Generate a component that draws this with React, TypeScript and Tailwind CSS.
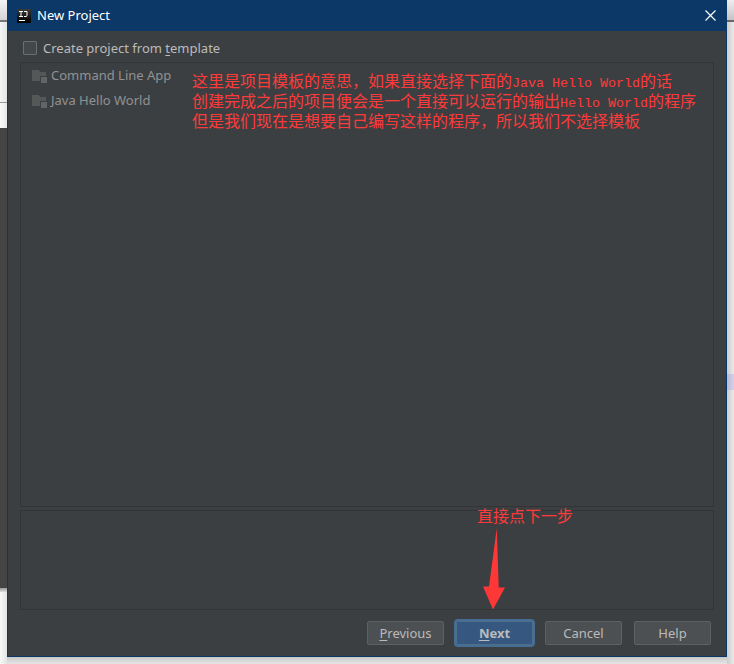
import React from "react";

const UI = "font-['Noto_Sans','Noto_Sans_CJK_SC',sans-serif]";
const NOTE = "font-['Noto_Sans_CJK_SC',sans-serif]";

function Latin({ children }: { children: string }) {
  return (
    <span className="font-['Liberation_Mono','Noto_Sans_CJK_SC',monospace] text-[13.33px]">{children}</span>
  );
}

function TemplateItem({ label, spacing }: { label: string; spacing: string }) {
  return (
    <div className="flex h-[25px] items-center">
      <svg width="16" height="14" viewBox="0 0 16 14" className="mr-[3px] shrink-0" shapeRendering="crispEdges">
        <path d="M0 1h6l2 2h6v4H8v5H0z" fill="#555857" />
        <path d="M9 8h6v6H9z" fill="#626566" />
      </svg>
      <span className={`whitespace-nowrap text-[13px] leading-[25px] text-[#909294] ${spacing}`}>{label}</span>
    </div>
  );
}

function DialogButton({ children }: { children: React.ReactNode }) {
  return (
    <button className="h-6 w-[77px] rounded-[2px] border border-[#5e6162] bg-[#4c5052] text-center text-[13px] leading-[23px] text-[#bbbbbb]">
      {children}
    </button>
  );
}

export default function App() {
  return (
    <div className={`flex h-[664px] w-[734px] overflow-hidden bg-[#f2f2f2] ${UI}`}>
      <div className="flex w-[7px] shrink-0 flex-col">
        <div className="h-5 bg-linear-to-b from-[#f4f4f4] to-[#d4d4d4]" />
        <div className="h-0.5 bg-[#777777]" />
        <div className="h-20 bg-linear-to-r from-[#f5f5f5] to-[#e4e4e4]" />
        <div className="h-px bg-[#999999]" />
        <div className="h-[25px] bg-linear-to-r from-[#fafafa] to-[#e8e8e8]" />
        <div className="h-[460px] bg-[#444444]" />
        <div className="h-1 bg-linear-to-b from-[#999999] to-[#dddddd]" />
        <div className="flex-1 bg-linear-to-r from-[#f8f8f8] to-[#e4e4e4]" />
      </div>

      <div className="flex w-[720px] shrink-0 flex-col">
        <div className="flex h-[657px] flex-col border-x border-b border-[#0b3867] bg-[#3c3f41]">
          <header className="flex h-[31px] shrink-0 items-center bg-[#0b3867] pl-[9px] pr-[10px]">
            <svg width="14" height="14" viewBox="0 0 14 14" className="shrink-0">
              <defs>
                <linearGradient id="logo" x1="0" y1="0" x2="0" y2="1">
                  <stop offset="0" stopColor="#3a3a3a" />
                  <stop offset="1" stopColor="#000000" />
                </linearGradient>
              </defs>
              <path d="M0 0h14v14H0z" fill="url(#logo)" />
              <path d="M2 2.5h4M4 2.5v5M2 7.5h4M7 2.5h3v4q0 1-1 1H7M2 11.5h6" fill="none" stroke="#fff" />
            </svg>
            <h1 className="ml-1.5 text-[13px] leading-[31px] text-white">New Project</h1>
            <svg width="11" height="11" viewBox="0 0 11 11" className="ml-auto">
              <path d="M.5 .5l10 10M10.5 .5l-10 10" stroke="#fff" strokeWidth="1.2" />
            </svg>
          </header>

          <label className="flex h-[31px] shrink-0 items-center pl-[15px] pt-[3px]">
            <span className="h-3.5 w-3.5 rounded-[1px] border border-[#6b6d6e] bg-[#43494a]" />
            <span className="ml-[6px] text-[13px] leading-7 text-[#bbbbbb]">
              Create project from <u className="underline-offset-2">t</u>emplate
            </span>
          </label>

          <main className="ml-3 flex h-[445px] w-[694px] shrink-0 border border-[#323435]">
            <div className="w-[171px] shrink-0 pl-[11px]">
              <TemplateItem label="Command Line App" spacing="tracking-normal" />
              <TemplateItem label="Java Hello World" spacing="tracking-normal" />
            </div>
            <div className={`whitespace-nowrap pt-[7px] text-[16px] leading-5 text-[#ff3a3a] ${NOTE}`}>
              <p className="h-5">这里是项目模板的意思，如果直接选择下面的<Latin>Java Hello World</Latin>的话</p>
              <p className="h-5">创建完成之后的项目便会是一个直接可以运行的输出<Latin>Hello World</Latin>的程序</p>
              <p className="h-5">但是我们现在是想要自己编写这样的程序，所以我们不选择模板</p>
            </div>
          </main>

          <section className="relative ml-3 mt-[3px] h-[100px] w-[694px] shrink-0 border border-[#323435]">
            <p className={`absolute -top-[6px] left-[456px] whitespace-nowrap text-[16px] leading-5 text-[#ff3a3a] ${NOTE}`}>
              直接点下一步
            </p>
            <svg width="22" height="82" viewBox="0 0 22 82" className="absolute left-[462px] top-[17px]">
              <path d="M13.8 0L15.7 59.5H22L10 81.5L0 58.5H6z" fill="#ff3737" />
            </svg>
          </section>

          <footer className="flex h-[46px] shrink-0 items-center justify-end pr-[15px]">
            <DialogButton><u className="underline-offset-2">P</u>revious</DialogButton>
            <button className="ml-[10px] mr-[10px] h-7 w-[81px] rounded-[4px] border-2 border-[#466d94] bg-[#365880] text-center text-[13px] font-bold leading-[23px] text-[#bbbbbb] shadow-[inset_0_0_0_1px_#4c708c]">
              <u className="underline-offset-2">N</u>ext
            </button>
            <DialogButton>Cancel</DialogButton>
            <span className="w-3" />
            <DialogButton>Help</DialogButton>
          </footer>
        </div>
        <div className="h-[7px] bg-linear-to-b from-[#c8c8c8] to-[#e5e5e5]" />
      </div>

      <div className="flex w-[7px] shrink-0 flex-col">
        <div className="h-5 bg-linear-to-b from-[#eeeeee] to-[#c4c4c4]" />
        <div className="h-0.5 bg-[#666666]" />
        <div className="h-[352px] bg-linear-to-r from-[#cccccc] to-[#ebebeb]" />
        <div className="h-4 bg-linear-to-r from-[#b9b9d0] to-[#d2d2ee]" />
        <div className="flex-1 bg-linear-to-r from-[#cccccc] to-[#ebebeb]" />
      </div>
    </div>
  );
}
